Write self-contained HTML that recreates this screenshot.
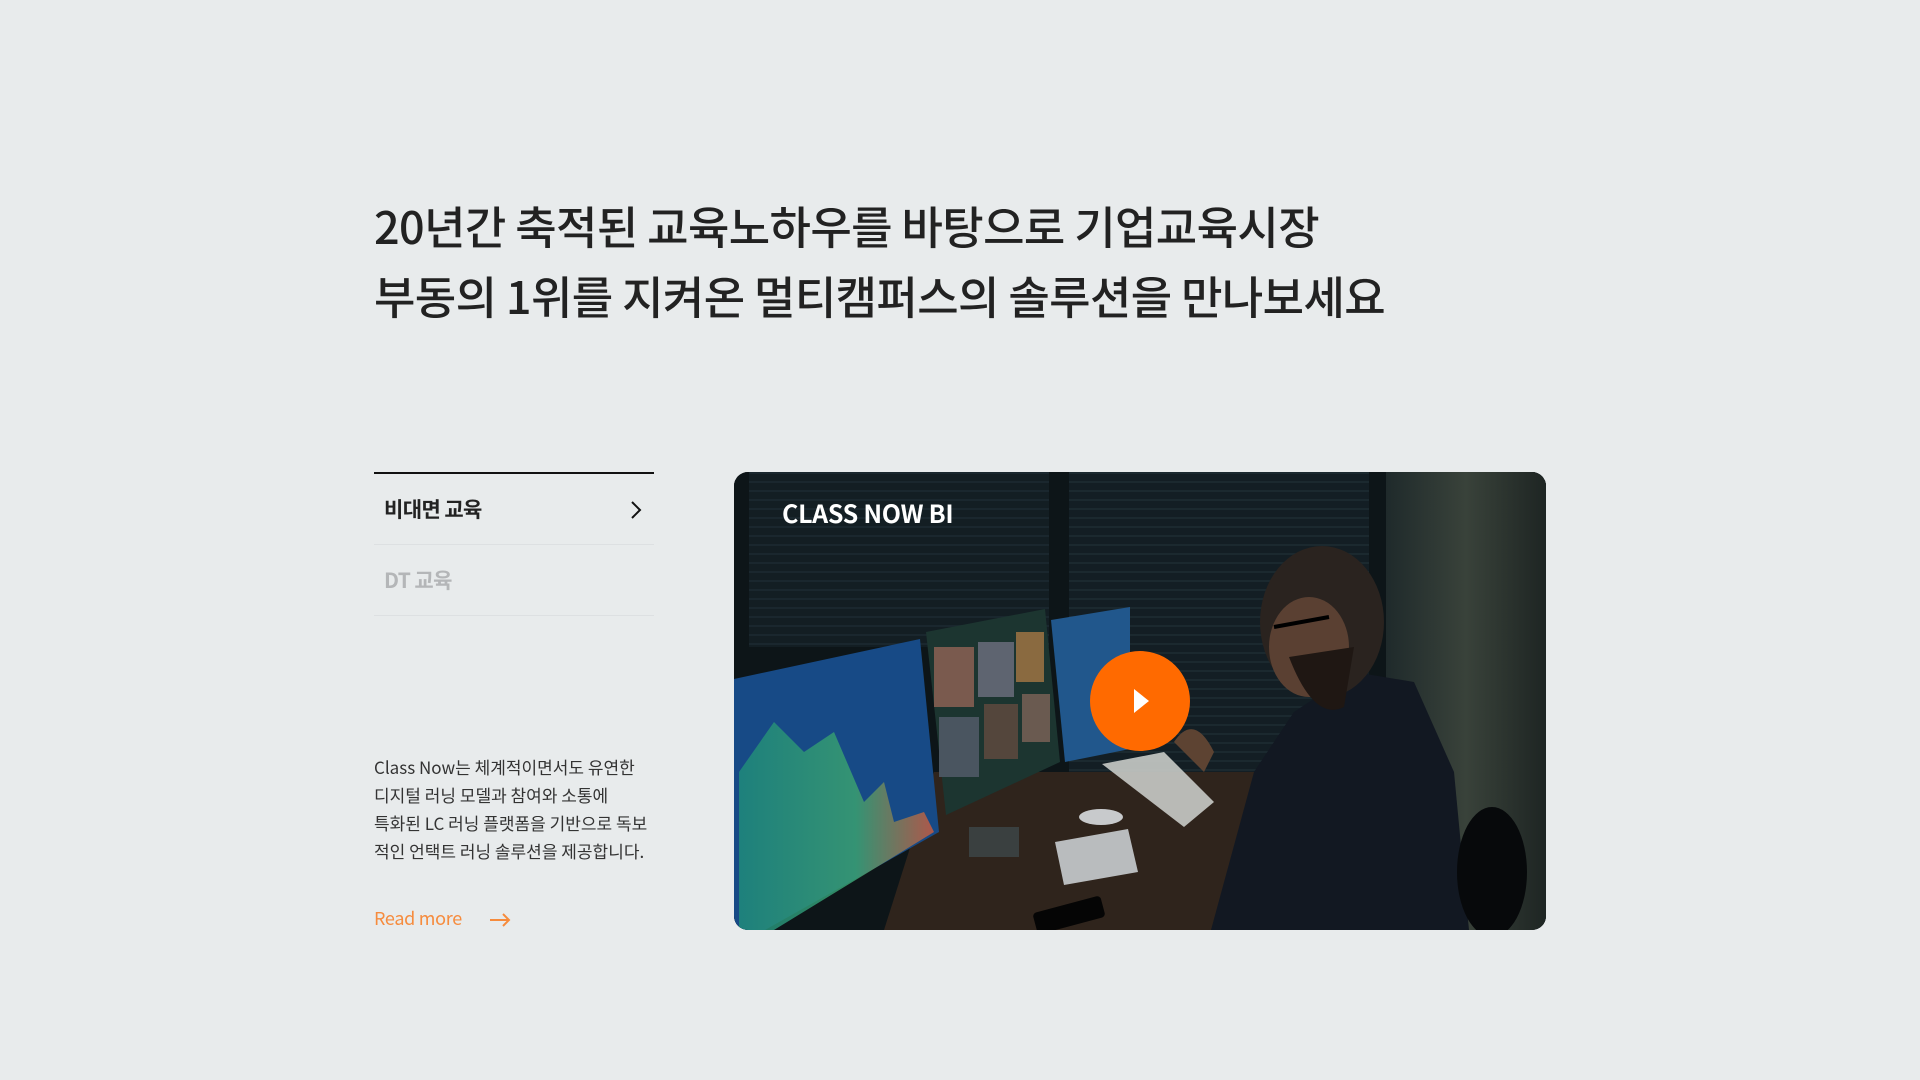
<!DOCTYPE html>
<html><head><meta charset="utf-8"><style>
html,body{margin:0;padding:0}
body{width:1920px;height:1080px;background:#e8ebec;position:relative;overflow:hidden;font-family:"Liberation Sans","Noto Sans CJK KR",sans-serif;color:#222}
h1{position:absolute;left:374px;top:190px;margin:0;font-weight:500;font-size:45px;line-height:70px;letter-spacing:-0.6px;color:#222;font-family:"Noto Sans CJK KR",sans-serif;white-space:nowrap}
.menu{position:absolute;left:374px;top:472px;width:280px;border-top:2px solid #111}
.item{height:70px;border-bottom:1px solid #dde0e2;display:flex;align-items:center;padding-left:10px;font-family:"Noto Sans CJK KR",sans-serif;font-weight:700;font-size:21px;letter-spacing:-0.6px;position:relative}
.item.off{color:#b4b6b8}
.chev{position:absolute;right:12px;top:26px}
p{position:absolute;left:374px;top:753px;margin:0;font-family:"Noto Sans CJK KR",sans-serif;font-size:17px;line-height:28px;letter-spacing:0;color:#333;white-space:nowrap}
.rm{position:absolute;left:374px;top:905px;color:#f68b3d;font-family:"Noto Sans CJK KR",sans-serif;font-size:18px;letter-spacing:-0.3px}
.video{position:absolute;left:734px;top:472px;width:812px;height:458px;border-radius:14px;overflow:hidden;background:#0f171b}
.title{position:absolute;left:48px;top:23px;color:#fff;font-weight:700;font-size:25px;letter-spacing:-0.3px;font-family:"Noto Sans CJK KR",sans-serif}
.play{position:absolute;left:356px;top:179px;width:100px;height:100px;border-radius:50%;background:#ff6a00}
.play:after{content:"";position:absolute;left:44px;top:38px;border-left:15px solid #fff;border-top:12px solid transparent;border-bottom:12px solid transparent}
</style></head><body>
<h1>20년간 축적된 교육노하우를 바탕으로 기업교육시장<br>부동의 1위를 지켜온 멀티캠퍼스의 솔루션을 만나보세요</h1>
<div class="menu">
<div class="item">비대면 교육<svg class="chev" width="12" height="20" viewBox="0 0 12 20"><path d="M2 2l8 8-8 8" fill="none" stroke="#111" stroke-width="2"/></svg></div>
<div class="item off">DT 교육</div>
</div>
<p>Class Now는 체계적이면서도 유연한<br>디지털 러닝 모델과 참여와 소통에<br>특화된 LC 러닝 플랫폼을 기반으로 독보<br>적인 언택트 러닝 솔루션을 제공합니다.</p>
<div class="rm">Read more<svg style="position:absolute;left:115px;top:8px" width="22" height="14" viewBox="0 0 22 14"><path d="M1 7h19M14 1l6 6-6 6" fill="none" stroke="#f68b3d" stroke-width="2"/></svg></div>
<div class="video">
<svg width="812" height="458" viewBox="0 0 812 458" style="position:absolute;left:0;top:0">
<defs>
<pattern id="bl" width="10" height="9" patternUnits="userSpaceOnUse"><rect width="10" height="9" fill="#142026"/><rect width="10" height="2" fill="#1d2c33"/></pattern>
<linearGradient id="wall" x1="0" x2="1"><stop offset="0" stop-color="#1f2a2b"/><stop offset="0.5" stop-color="#39423a"/><stop offset="1" stop-color="#1e2523"/></linearGradient>
<linearGradient id="chart" x1="0" x2="1"><stop offset="0" stop-color="#1f8a7a"/><stop offset="0.6" stop-color="#3aa070"/><stop offset="1" stop-color="#c85a40"/></linearGradient>
</defs>
<rect width="812" height="458" fill="#0d1518"/>
<rect x="15" y="0" width="300" height="175" fill="url(#bl)" opacity="0.8"/>
<rect x="335" y="0" width="300" height="300" fill="url(#bl)" opacity="0.85"/>
<rect x="652" y="0" width="160" height="458" fill="url(#wall)"/>
<polygon points="150,458 200,300 560,300 600,458" fill="#2f241c"/>
<polygon points="0,207 186,167 205,360 31,458 0,458" fill="#174a86"/>
<polygon points="5,300 40,250 70,280 100,260 130,330 150,310 160,350 190,340 200,360 40,458 5,458" fill="url(#chart)" opacity="0.85"/>
<polygon points="192,160 311,137 326,290 212,343" fill="#1c3530"/>
<rect x="200" y="175" width="40" height="60" fill="#7a5a4e"/><rect x="244" y="170" width="36" height="55" fill="#5e6470"/><rect x="282" y="160" width="28" height="50" fill="#8a6a40"/>
<rect x="205" y="245" width="40" height="60" fill="#4a5560"/><rect x="250" y="232" width="34" height="55" fill="#54463c"/><rect x="288" y="222" width="28" height="48" fill="#6a5a50"/>
<polygon points="317,148 396,135 396,277 331,290" fill="#21578c"/>
<rect x="235" y="355" width="50" height="30" fill="#3a4040"/>
<polygon points="321,370 394,357 404,400 330,413" fill="#b9bcbe"/>
<ellipse cx="367" cy="345" rx="22" ry="8" fill="#c8cacc"/>
<polygon points="368,292 430,280 480,330 450,355" fill="#c9cbc8" opacity="0.9"/>
<rect x="300" y="432" width="70" height="22" rx="4" fill="#050505" transform="rotate(-15 335 443)"/>
<path d="M477 458 L520 300 L560 240 L620 200 L680 210 L720 300 L735 458 Z" fill="#121822"/>
<ellipse cx="588" cy="150" rx="62" ry="76" fill="#2a231f"/>
<ellipse cx="575" cy="175" rx="40" ry="50" fill="#5a4032"/>
<path d="M555 185 Q580 250 610 235 L620 175 Z" fill="#1f1713"/>
<path d="M540 155 l55 -10" stroke="#000" stroke-width="4"/>
<path d="M440 270 Q460 240 480 280 L470 300 Z" fill="#5d4332"/>
<ellipse cx="758" cy="400" rx="35" ry="65" fill="#07090b"/>
</svg>
<div class="title">CLASS NOW BI</div>
<div class="play"></div>
</div>
</body></html>
